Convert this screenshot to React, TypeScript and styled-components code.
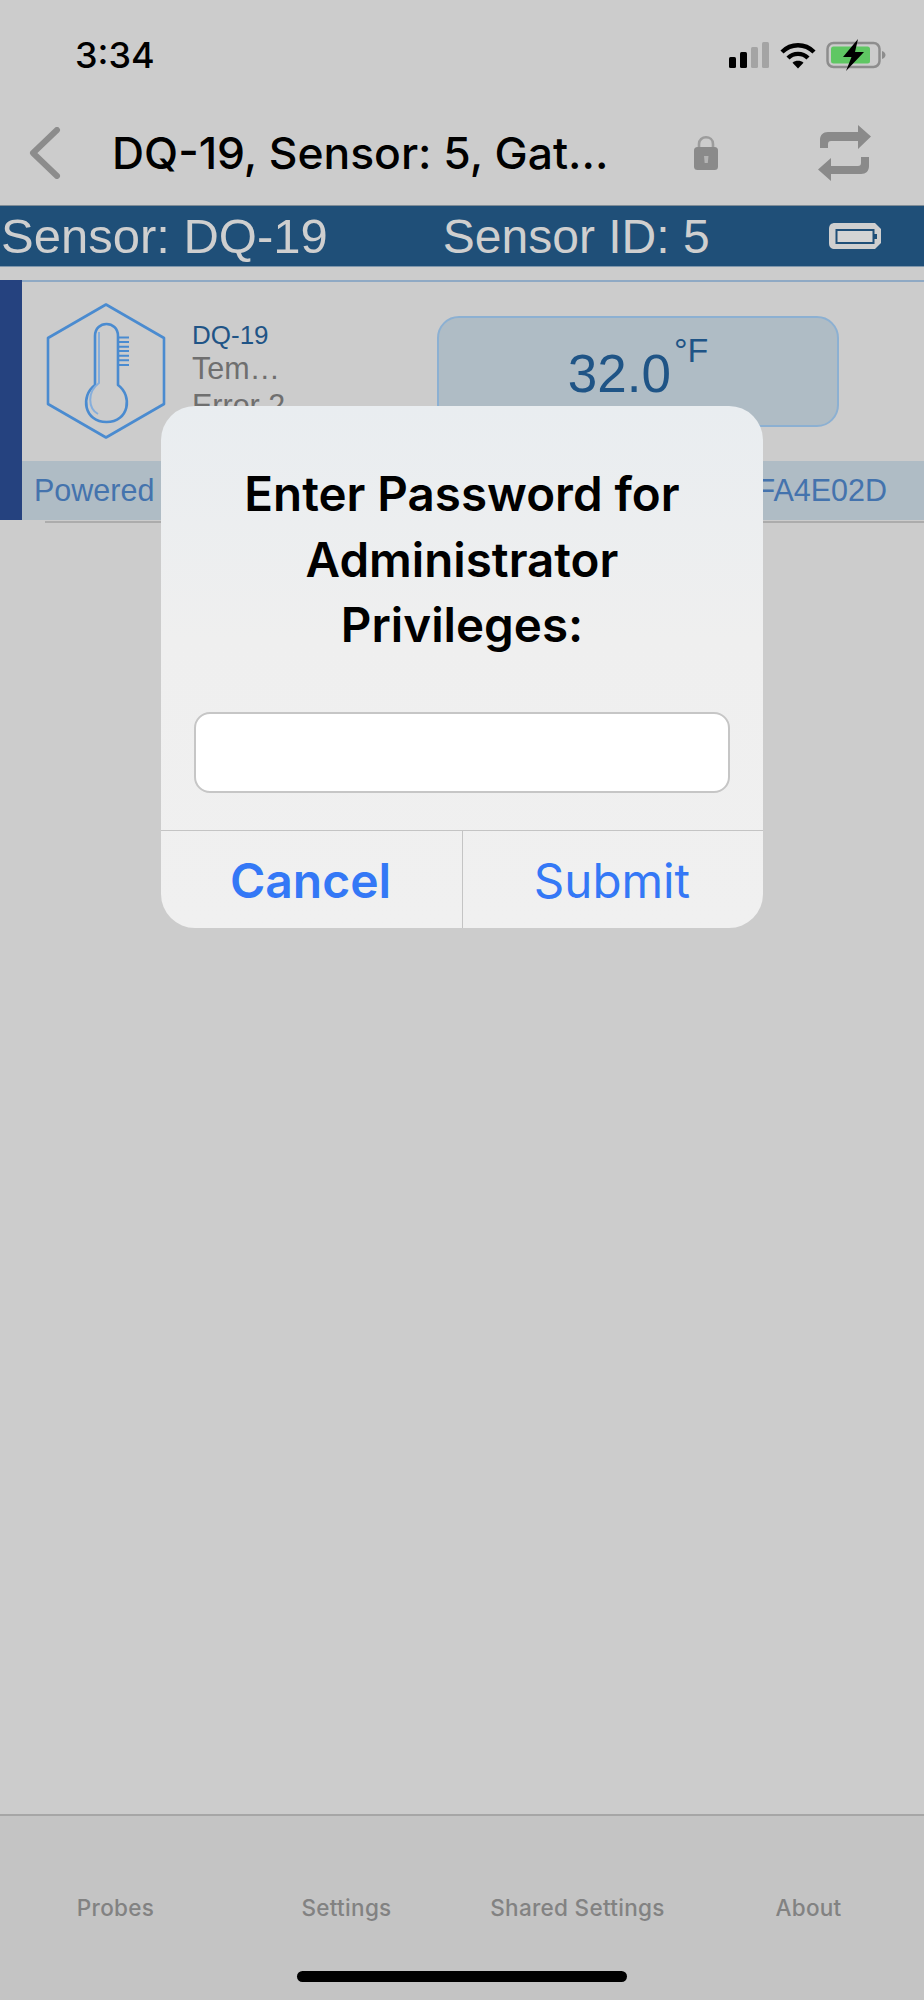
import styled, { createGlobalStyle } from "styled-components"

const GlobalStyle = createGlobalStyle`
  html, body { margin: 0; padding: 0; background: #cccccc; }
  * { box-sizing: border-box; }
`

// Styles
const Screen = styled.div`
  background: #cccccc;
  display: flex;
  flex-direction: column;
  font-family: "Liberation Sans", Arial, sans-serif;
  height: 2000px;
  overflow: hidden;
  position: relative;
  width: 924px;
`
const StatusBar = styled.div`
  align-items: center;
  display: flex;
  height: 100px;
  justify-content: space-between;
  padding: 10px 38px 0 75px;
`
const Time = styled.div`
  color: #000;
  font-family: Inter, sans-serif;
  font-size: 36px;
  font-weight: 500;
`
const NavBar = styled.div`
  align-items: center;
  display: flex;
  height: 105px;
  padding-left: 29px;
`
const NavTitle = styled.div`
  color: #000;
  flex: 0 0 auto;
  font-family: Inter, sans-serif;
  font-size: 44.4px;
  font-weight: 500;
  margin-left: 51px;
  white-space: nowrap;
  width: 582px;
`
const SensorBar = styled.div`
  align-items: center;
  background: #1f4f78;
  border-bottom: 1px solid #7f97ac;
  border-top: 1px solid #7f8c96;
  color: #cfcfcf;
  display: flex;
  font-size: 49px;
  height: 62px;
  padding-left: 1px;
`
const SensorId = styled.span`
  font-size: 48px;
  margin-left: 115px;
`
const BatteryGlyph = styled.svg`
  margin-left: 119px;
`
const Probe = styled.div`
  display: flex;
  margin-top: 13px;
`
const ProbeEdge = styled.div`
  background: #25427f;
  flex: 0 0 22px;
  height: 240px;
`
const ProbeMain = styled.div`
  flex: 1;
`
const TopRule = styled.div`
  background: #8fa9c4;
  height: 2px;
`
const ProbeBody = styled.div`
  align-items: flex-start;
  display: flex;
  height: 179px;
  padding: 21px 0 0 24px;
`
const ProbeInfo = styled.div`
  flex: 0 0 246px;
  font-size: 30.5px;
  line-height: 37px;
  margin-left: 26px;
  padding-top: 17px;
`
const ProbeName = styled.div`
  color: #1f5486;
  font-size: 26px;
  line-height: 30px;
`
const ProbeLine = styled.div`
  color: #6f6f6f;
`
const ValueBox = styled.div`
  background: #afbcc5;
  border: 2px solid #8cb0d2;
  border-radius: 22px;
  color: #1f5486;
  display: flex;
  font-size: 53px;
  height: 111px;
  justify-content: center;
  margin: 13px 0 0 -1px;
  padding-top: 25px;
  width: 402px;
`
const ValueUnit = styled.span`
  font-size: 34px;
  line-height: 34px;
  margin-left: 3px;
  margin-top: -10px;
`
const Strip = styled.div`
  align-items: center;
  background: #afbcc5;
  color: #4473ad;
  display: flex;
  font-size: 30.5px;
  height: 59px;
  justify-content: space-between;
  padding: 0 37px 0 12px;
`
const BottomRule = styled.div`
  background: #acacac;
  height: 2px;
  margin: 1px 0 0 23px;
`
const TabBar = styled.div`
  background: #c4c4c4;
  border-top: 2px solid #a6a6a6;
  display: grid;
  grid-template-columns: repeat(4, 1fr);
  height: 186px;
  margin-top: auto;
  padding-top: 78px;
`
const TabLabel = styled.div`
  color: #828282;
  font-family: Inter, sans-serif;
  font-size: 22.5px;
  font-weight: 500;
  letter-spacing: 0.3px;
  text-align: center;
`
const HomeBar = styled.div`
  background: #000;
  border-radius: 6px;
  bottom: 18px;
  height: 11px;
  left: 297px;
  position: absolute;
  width: 330px;
`
const Dialog = styled.div`
  background: linear-gradient(180deg, #e9edf0 0%, #efefef 45%, #f0f0f0 100%);
  border-radius: 34px;
  left: 161px;
  position: absolute;
  top: 406px;
  width: 602px;
`
const DialogTitle = styled.div`
  color: #000;
  font-family: Inter, sans-serif;
  font-size: 47.5px;
  font-weight: 600;
  line-height: 65.5px;
  padding: 55px 30px 54px;
  text-align: center;
`
const PasswordInput = styled.input`
  background: #fff;
  border: 2px solid #c6c6c6;
  border-radius: 16px;
  display: block;
  height: 81px;
  margin: 0 33px;
  outline: none;
  width: 536px;
`
const DialogActions = styled.div`
  border-top: 1px solid #c4c4c4;
  display: grid;
  grid-template-columns: 1fr 1fr;
  height: 98px;
  margin-top: 37px;
`
const DialogButton = styled.button<{ $bold?: boolean }>`
  background: none;
  border: 0;
  border-left: ${p => (p.$bold ? "0" : "1px solid #c4c4c4")};
  color: #3478f6;
  font-family: Inter, sans-serif;
  font-size: ${p => (p.$bold ? "48px" : "47.5px")};
  font-weight: ${p => (p.$bold ? 600 : 400)};
  padding: 2px 2px 0 0;
`
const StatusIcons = styled.div`
  align-items: center;
  display: flex;
  gap: 10px;
`
const NavIcons = styled.div`
  align-items: center;
  display: flex;
  gap: 100px;
`

const SignalIcon = () => (
  <svg width="41" height="26" viewBox="0 0 41 26">
    <rect x="0" y="15" width="7" height="11" rx="1.5" fill="#000" />
    <rect x="11" y="10" width="7" height="16" rx="1.5" fill="#000" />
    <rect x="22" y="5" width="7" height="21" rx="1.5" fill="#a4a4a4" />
    <rect x="33" y="0" width="7" height="26" rx="1.5" fill="#a4a4a4" />
  </svg>
)

const WifiIcon = () => (
  <svg width="36" height="27" viewBox="0 0 36 27" fill="none" stroke="#000" strokeWidth="4.4">
    <path d="M2 10 C11 1 25 1 34 10" />
    <path d="M8 16 C13.5 10.5 22.5 10.5 28 16" />
    <path d="M18 26.5 L12.5 20.8 C15.5 18.2 20.5 18.2 23.5 20.8 Z" fill="#000" stroke="none" />
  </svg>
)

const ChargingBattery = () => (
  <svg width="60" height="32" viewBox="0 0 60 32">
    <rect x="1.5" y="4" width="52" height="24" rx="6" fill="none" stroke="#8d8d8d" strokeWidth="2.5" />
    <rect x="5" y="7.5" width="39" height="17" rx="2.5" fill="#5fc763" />
    <path d="M56 12 C58.5 13 59.5 14.5 59.5 16 C59.5 17.5 58.5 19 56 20 Z" fill="#8d8d8d" />
    <path d="M32 0 L17 18 L25.5 18 L20 32 L38 13 L29 13 Z" fill="#000" />
  </svg>
)

const BackIcon = () => (
  <svg width="32" height="52" viewBox="0 0 32 52" fill="none" stroke="#8c8c8c" strokeWidth="6" strokeLinecap="round" strokeLinejoin="round">
    <path d="M28 3 L4 26 L28 49" />
  </svg>
)

const LockIcon = () => (
  <svg width="24" height="35" viewBox="0 0 24 35">
    <path d="M5 14 V9 C5 0 19 0 19 9 V14" fill="none" stroke="#9c9c9c" strokeWidth="2.6" />
    <rect x="0" y="12" width="24" height="23" rx="3.5" fill="#8a8a8a" />
    <path d="M10 21 H14.5 L13.8 28 H10.7 Z" fill="#b4b4b4" />
  </svg>
)

const RepeatIcon = () => (
  <svg width="54" height="56" viewBox="0 0 54 56" fill="#8a8a8a">
    <path d="M40 0 L53 11.5 L40 24 V16 H13 C11 16 10 17 10 19 V23 H2 V15 C2 10 5 7 10 7 H40 Z" />
    <path d="M13 33 L0 44.5 L13 56 V49 H43 C48 49 51 46 51 41 V32 H43 V38 C43 40 42 41 40 41 H13 Z" />
  </svg>
)

const ThermometerIcon = () => (
  <svg width="120" height="136" viewBox="46 303 120 136" fill="none" stroke="#4a8bd0" strokeWidth="2.6" strokeLinejoin="round">
    <path d="M106 304.5 L164 338 V404 L106 437.5 L48 404 V338 Z" />
    <path d="M95 385 V336 C95 320 118 320 118 336 V385 C133 396 129 422 106.5 422 C84 422 80 396 95 385 Z" />
    <path d="M99 332 V383 C87 392 88 408 98 414" stroke="#86aedb" strokeWidth="2" />
    <path d="M118 337.5 H129 M118 342 H129 M118 346.7 H129 M118 351 H129 M118 355.7 H129 M118 360.3 H129 M118 365 H129" strokeWidth="2" />
  </svg>
)

const SmallBattery = () => (
  <BatteryGlyph width="52" height="26" viewBox="0 0 52 26">
    <path d="M6 0 H46 L52 6 V20 L46 26 H6 C2 26 0 24 0 20 V6 C0 2 2 0 6 0 Z" fill="#cfcfcf" />
    <rect x="7.5" y="7" width="37" height="13" fill="#d4d4d4" stroke="#1f4f78" strokeWidth="2" />
    <rect x="45" y="11" width="3" height="5" fill="#1f4f78" />
  </BatteryGlyph>
)

const App: React.FC = () => {
  return (
    <Screen>
      <GlobalStyle />
      <StatusBar>
        <Time>3:34</Time>
        <StatusIcons>
          <SignalIcon />
          <WifiIcon />
          <ChargingBattery />
        </StatusIcons>
      </StatusBar>
      <NavBar>
        <BackIcon />
        <NavTitle>DQ-19, Sensor: 5, Gat...</NavTitle>
        <NavIcons>
          <LockIcon />
          <RepeatIcon />
        </NavIcons>
      </NavBar>
      <SensorBar>
        <span>Sensor: DQ-19</span>
        <SensorId>Sensor ID: 5</SensorId>
        <SmallBattery />
      </SensorBar>
      <Probe>
        <ProbeEdge />
        <ProbeMain>
          <TopRule />
          <ProbeBody>
            <ThermometerIcon />
            <ProbeInfo>
              <ProbeName>DQ-19</ProbeName>
              <ProbeLine>Tem…</ProbeLine>
              <ProbeLine>Error 2</ProbeLine>
            </ProbeInfo>
            <ValueBox>
              32.0<ValueUnit>°F</ValueUnit>
            </ValueBox>
          </ProbeBody>
          <Strip>
            <span>Powered</span>
            <span>FA4E02D</span>
          </Strip>
          <BottomRule />
        </ProbeMain>
      </Probe>
      <TabBar>
        <TabLabel>Probes</TabLabel>
        <TabLabel>Settings</TabLabel>
        <TabLabel>Shared Settings</TabLabel>
        <TabLabel>About</TabLabel>
      </TabBar>
      <HomeBar />
      <Dialog>
        <DialogTitle>Enter Password for Administrator Privileges:</DialogTitle>
        <PasswordInput type="password" />
        <DialogActions>
          <DialogButton $bold>Cancel</DialogButton>
          <DialogButton>Submit</DialogButton>
        </DialogActions>
      </Dialog>
    </Screen>
  )
}

export default App
